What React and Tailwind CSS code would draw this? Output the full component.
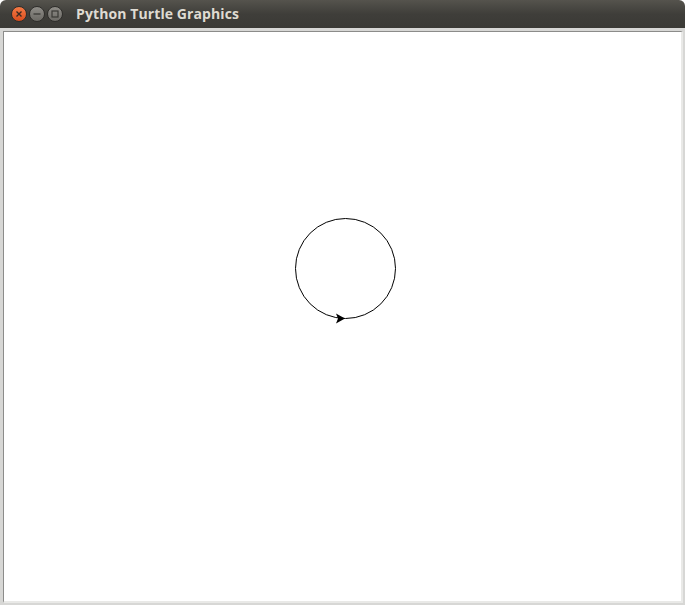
export default function App() {
  return (
    <div className="w-[685px] h-[605px] flex flex-col bg-white overflow-hidden">
      <TitleBar />
      <div className="flex-1 flex flex-col bg-[#d7d7d5] pl-[3px] pt-[3px] pr-[2px] pb-[2px]">
        <div className="flex-1 border-l border-t border-[#8c8c8a] border-r-2 border-b-2 border-r-[#e9e9e7] border-b-[#e9e9e7] bg-white relative">
          <Canvas />
        </div>
      </div>
    </div>
  );
}

function TitleBar() {
  return (
    <div className="h-[28px] shrink-0 rounded-t-[6px] bg-gradient-to-b from-[#55534d] via-[#3f3e3a] to-[#3a3935] flex items-center pl-[11px]">
      <div className="flex items-center gap-[2px]">
        <WinButton kind="close" />
        <WinButton kind="min" />
        <WinButton kind="max" />
      </div>
      <span
        className="ml-[13px] text-[14px] font-bold text-[#dfdbd2] leading-none tracking-[0.1px]"
        style={{ fontFamily: '"Open Sans", "DejaVu Sans", sans-serif' }}
      >
        Python Turtle Graphics
      </span>
    </div>
  );
}

function WinButton({ kind }) {
  const isClose = kind === "close";
  return (
    <div
      className={
        "w-[16px] h-[16px] rounded-full flex items-center justify-center border border-[#2f2e2b] " +
        (isClose
          ? "bg-gradient-to-b from-[#f47a45] to-[#d94c1c]"
          : "bg-gradient-to-b from-[#8f8d88] to-[#6b6964]")
      }
    >
      <svg width="10" height="10" viewBox="0 0 10 10">
        {kind === "close" && (
          <path d="M2.5 2.5 L7.5 7.5 M7.5 2.5 L2.5 7.5" stroke="#3a2a22" strokeWidth="1.4" />
        )}
        {kind === "min" && <path d="M1.5 5 H8.5" stroke="#3a3935" strokeWidth="1.3" />}
        {kind === "max" && (
          <rect x="2" y="2" width="6" height="6" fill="none" stroke="#3a3935" strokeWidth="1.2" />
        )}
      </svg>
    </div>
  );
}

function Canvas() {
  // page coords: canvas interior starts at (4, 32)
  const ox = 4;
  const oy = 32;
  const cx = 345 - ox;
  const cy = 268 - oy;
  const tx = 345 - ox;
  const ty = 318.5 - oy;
  return (
    <svg className="absolute left-0 top-0" width="677" height="568">
      <circle cx={cx + 0.5} cy={cy + 0.5} r="50" fill="none" stroke="#000" strokeWidth="1" />
      <polygon
        points={`${tx},${ty} ${tx - 9},${ty - 5} ${tx - 7},${ty} ${tx - 9},${ty + 5}`}
        fill="#000"
      />
    </svg>
  );
}
